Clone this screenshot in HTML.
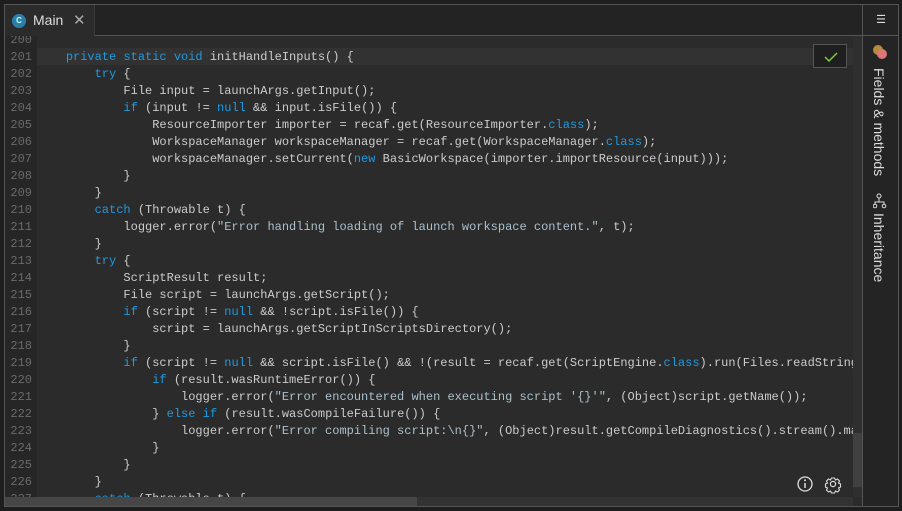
<!DOCTYPE html>
<html><head><style>
*{margin:0;padding:0;box-sizing:border-box}
body{width:902px;height:511px;background:#1e1e1e;overflow:hidden;position:relative;font-family:"Liberation Sans",sans-serif}
.frame{position:absolute;left:4px;top:4px;width:895px;height:503px;border:1px solid #555;background:#2b2b2b}
.tabbar{position:absolute;left:5px;top:5px;width:857px;height:31px;background:#232323;border-bottom:1px solid #555}
.tab{position:absolute;left:5px;top:5px;width:90px;height:31px;background:#2b2b2b;border-right:1px solid #3a3a3a}
.tab .ic{position:absolute;left:7px;top:9px;width:14px;height:14px;border-radius:50%;background:#2a7fa8;color:#cfe;font-size:8px;text-align:center;line-height:14px;font-weight:bold}
.tab .t{position:absolute;left:28px;top:7px;color:#ddd;font-size:14px}
.tab .x{position:absolute;left:68px;top:6px;color:#aaa;font-size:15px}
.side{position:absolute;left:862px;top:5px;width:36px;height:501px;background:#242424;border-left:1px solid #555}
.side .hb{position:absolute;left:0;top:0;width:36px;height:31px;border-bottom:1px solid #555;color:#ddd;font-size:11px;text-align:center;line-height:31px}
.vt{position:absolute;writing-mode:vertical-rl;color:#ddd;font-size:14px;left:8px}
.gut{position:absolute;left:5px;top:36px;width:32px;height:461px;background:#262626}
.code{position:absolute;left:5px;top:36px;width:848px;height:461px;overflow:hidden}
.hl{position:absolute;left:32px;top:12px;width:816px;height:18px;background:#323232}
.ln{position:absolute;left:0;width:27px;text-align:right;color:#6a6a6a}
.l{position:absolute;left:32px;white-space:pre;color:#cccccc}
.code div{font-family:"Liberation Mono",monospace;font-size:12px;line-height:17px;height:17px}
.k{color:#1e9ae0}.s{color:#a9c0cc}
.vs{position:absolute;left:853px;top:36px;width:9px;height:461px;background:#2f2f2f}
.vs i{position:absolute;left:0;top:397px;width:9px;height:54px;background:#404040}
.hs{position:absolute;left:5px;top:497px;width:848px;height:9px;background:#333}
.hs i{position:absolute;left:0;top:0;width:412px;height:9px;background:#464646}
.chk{position:absolute;left:813px;top:44px;width:34px;height:24px;border:1px solid #555;background:#1f1f1f}
</style></head><body>
<div class="frame"></div>
<div class="tabbar"></div>
<div class="tab"><div class="ic">C</div><div class="t">Main</div><div class="x">✕</div></div>
<div class="gut"></div>
<div class="code">
<div class="hl"></div>
<div class="ln" style="top:-4px">200</div>
<div class="ln" style="top:13px">201</div><div class="l" style="top:13px">    <span class="k">private static void</span> initHandleInputs() {</div>
<div class="ln" style="top:30px">202</div><div class="l" style="top:30px">        <span class="k">try</span> {</div>
<div class="ln" style="top:47px">203</div><div class="l" style="top:47px">            File input = launchArgs.getInput();</div>
<div class="ln" style="top:64px">204</div><div class="l" style="top:64px">            <span class="k">if</span> (input != <span class="k">null</span> &amp;&amp; input.isFile()) {</div>
<div class="ln" style="top:81px">205</div><div class="l" style="top:81px">                ResourceImporter importer = recaf.get(ResourceImporter.<span class="k">class</span>);</div>
<div class="ln" style="top:98px">206</div><div class="l" style="top:98px">                WorkspaceManager workspaceManager = recaf.get(WorkspaceManager.<span class="k">class</span>);</div>
<div class="ln" style="top:115px">207</div><div class="l" style="top:115px">                workspaceManager.setCurrent(<span class="k">new</span> BasicWorkspace(importer.importResource(input)));</div>
<div class="ln" style="top:132px">208</div><div class="l" style="top:132px">            }</div>
<div class="ln" style="top:149px">209</div><div class="l" style="top:149px">        }</div>
<div class="ln" style="top:166px">210</div><div class="l" style="top:166px">        <span class="k">catch</span> (Throwable t) {</div>
<div class="ln" style="top:183px">211</div><div class="l" style="top:183px">            logger.error(<span class="s">"Error handling loading of launch workspace content."</span>, t);</div>
<div class="ln" style="top:200px">212</div><div class="l" style="top:200px">        }</div>
<div class="ln" style="top:217px">213</div><div class="l" style="top:217px">        <span class="k">try</span> {</div>
<div class="ln" style="top:234px">214</div><div class="l" style="top:234px">            ScriptResult result;</div>
<div class="ln" style="top:251px">215</div><div class="l" style="top:251px">            File script = launchArgs.getScript();</div>
<div class="ln" style="top:268px">216</div><div class="l" style="top:268px">            <span class="k">if</span> (script != <span class="k">null</span> &amp;&amp; !script.isFile()) {</div>
<div class="ln" style="top:285px">217</div><div class="l" style="top:285px">                script = launchArgs.getScriptInScriptsDirectory();</div>
<div class="ln" style="top:302px">218</div><div class="l" style="top:302px">            }</div>
<div class="ln" style="top:319px">219</div><div class="l" style="top:319px">            <span class="k">if</span> (script != <span class="k">null</span> &amp;&amp; script.isFile() &amp;&amp; !(result = recaf.get(ScriptEngine.<span class="k">class</span>).run(Files.readString(script.toPath()))).wasSuccess()) {</div>
<div class="ln" style="top:336px">220</div><div class="l" style="top:336px">                <span class="k">if</span> (result.wasRuntimeError()) {</div>
<div class="ln" style="top:353px">221</div><div class="l" style="top:353px">                    logger.error(<span class="s">"Error encountered when executing script '{}'"</span>, (Object)script.getName());</div>
<div class="ln" style="top:370px">222</div><div class="l" style="top:370px">                } <span class="k">else if</span> (result.wasCompileFailure()) {</div>
<div class="ln" style="top:387px">223</div><div class="l" style="top:387px">                    logger.error(<span class="s">"Error compiling script:\n{}"</span>, (Object)result.getCompileDiagnostics().stream().map(Object::toString));</div>
<div class="ln" style="top:404px">224</div><div class="l" style="top:404px">                }</div>
<div class="ln" style="top:421px">225</div><div class="l" style="top:421px">            }</div>
<div class="ln" style="top:438px">226</div><div class="l" style="top:438px">        }</div>
<div class="ln" style="top:455px">227</div><div class="l" style="top:455px">        <span class="k">catch</span> (Throwable t) {</div>
</div>
<div class="chk"><svg width="34" height="24" style="position:absolute;left:0;top:0"><path d="M11 12 L15 16 L23 8" stroke="#7fd23a" stroke-width="1.4" fill="none"/></svg></div>
<svg style="position:absolute;left:796px;top:475px" width="50" height="20">
<circle cx="9" cy="9" r="7" stroke="#ddd" stroke-width="1.3" fill="none"/><line x1="9" y1="8" x2="9" y2="13" stroke="#ddd" stroke-width="1.5"/><circle cx="9" cy="5.3" r="1" fill="#ddd"/>
<circle cx="37" cy="9" r="2.6" stroke="#ddd" stroke-width="1.2" fill="none"/>
<path d="M35.5 3 h3 l1 2 l2 -1 l2 2 l-1 2 l2 1 v3 l-2 1 l1 2 l-2 2 l-2 -1 l-1 2 h-3 l-1 -2 l-2 1 l-2 -2 l1 -2 l-2 -1 v-3 l2 -1 l-1 -2 l2 -2 l2 1 z" stroke="#ddd" stroke-width="1.1" fill="none"/>
</svg>
<div class="vs"><i></i></div>
<div class="hs"><i></i></div>
<div class="side"><div class="hb">☰</div>
<div style="position:absolute;left:10px;top:40px;width:10px;height:10px;border-radius:50%;background:#b58a3a"></div>
<div style="position:absolute;left:14px;top:44px;width:10px;height:10px;border-radius:50%;background:#d77"></div>
<div class="vt" style="top:63px">Fields &amp; methods</div>
<svg style="position:absolute;left:10px;top:188px" width="14" height="16"><circle cx="6" cy="3" r="2" stroke="#ddd" fill="none"/><circle cx="2" cy="13" r="1.8" stroke="#ddd" fill="none"/><circle cx="11" cy="13" r="1.8" stroke="#ddd" fill="none"/><path d="M6 5 V9 M2 11 V9 H11 V11" stroke="#ddd" fill="none"/></svg>
<div class="vt" style="top:208px">Inheritance</div>
</div>
</body></html>
